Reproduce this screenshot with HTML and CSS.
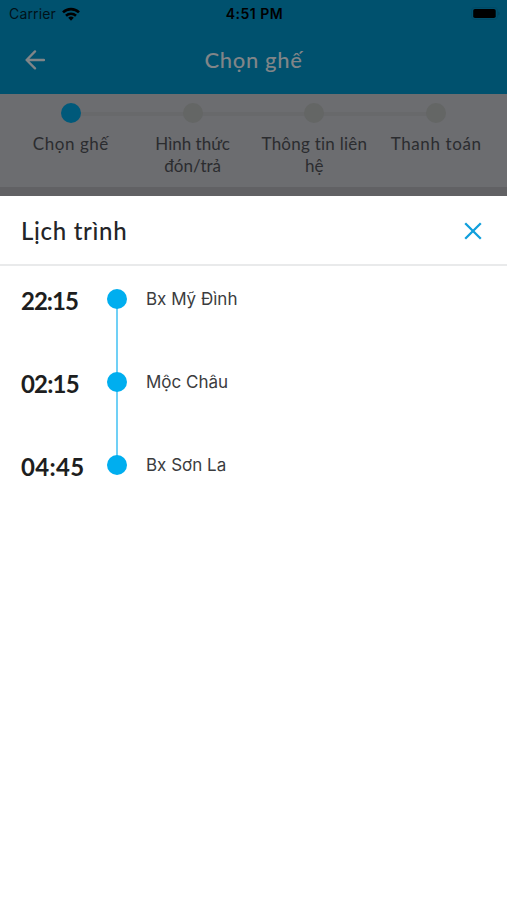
FILE: index.html
```
<!DOCTYPE html>
<html lang="vi">
<head>
<meta charset="utf-8">
<meta name="viewport" content="width=device-width, initial-scale=1">
<title>Lịch trình</title>
<link rel="stylesheet" href="styles.css">
</head>
<body>
<header class="header">
  <div class="status">
    <div class="carrier"><span>Carrier</span>
      <svg width="18" height="14" viewBox="0 0 18 14" fill="none" stroke="#000" stroke-width="2.6"><path d="M1 5.4a11.5 11.5 0 0 1 16 0M4 8.7a7.3 7.3 0 0 1 10 0"/><path d="M6.2 10.8a4.2 4.2 0 0 1 5.6 0L9 13.7z" fill="#000" stroke="none"/></svg>
    </div>
    <div class="clock">4:51 PM</div>
    <svg class="battery" width="30" height="14" viewBox="0 0 30 14"><rect x="1.5" y=".5" width="26" height="12" rx="3" fill="none" stroke="#004a66"/><rect x="3.2" y="2" width="22.5" height="9" rx="1.8"/><path d="M28.4 4.5v4c1.5-.6 1.5-3.4 0-4z" fill="#00435d"/></svg>
  </div>
  <div class="navbar">
    <svg class="back" width="20" height="20" viewBox="0 0 20 20" fill="none" stroke="#808588" stroke-width="2.3" stroke-linecap="round" stroke-linejoin="round"><path d="M19 10H1.6M10 1.4 1.6 10l8.4 8.4"/></svg>
    <h1>Chọn ghế</h1>
  </div>
</header>
<nav class="steps">
  <div class="step active"><i></i><span class="seat">Chọn ghế</span></div>
  <div class="step"><i></i><span class="ship">Hình thức<br>đón/trả</span></div>
  <div class="step"><i></i><span class="contact">Thông tin liên<br>hệ</span></div>
  <div class="step"><i></i><span class="pay">Thanh toán</span></div>
</nav>
<main class="sheet">
  <div class="sheet-head">
    <h2>Lịch trình</h2>
    <svg width="18" height="18" viewBox="0 0 18 18" fill="none" stroke="#109fdc" stroke-width="2.3"><path d="M1.2 1.2l15.6 15.6M16.8 1.2 1.2 16.8"/></svg>
  </div>
  <div class="timeline">
    <div class="stop"><time class="narrow">22:15</time><i></i><p>Bx Mỹ Đình</p></div>
    <div class="stop"><time class="medium">02:15</time><i></i><p>Mộc Châu</p></div>
    <div class="stop"><time class="wide">04:45</time><i></i><p>Bx Sơn La</p></div>
  </div>
</main>
</body>
</html>
```
FILE: styles.css
```
* { box-sizing: border-box; }
body {
  margin: 0;
  height: 900px;
  display: flex;
  flex-direction: column;
  background: #616164;
  font-family: Lato, "Open Sans", sans-serif;
  font-variant-ligatures: none;
  overflow: hidden;
}
svg { display: block; }
h1, h2, p { margin: 0; font-weight: 500; }
.header { height: 94px; background: #00516e; }
.status {
  height: 27px;
  padding: 0 7px 0 9px;
  display: grid;
  grid-template-columns: 1fr auto 1fr;
  align-items: center;
  font-family: Inter, sans-serif;
  font-size: 14px;
}
.carrier { display: flex; align-items: center; gap: 6px; color: #001219; letter-spacing: .15px; }
.clock { font-weight: 600; color: #000; letter-spacing: .5px; }
.battery { justify-self: end; }
.navbar {
  height: 66px;
  padding: 0 25px;
  display: grid;
  grid-template-columns: 40px 1fr 40px;
  align-items: center;
}
.navbar h1 {
  color: #808588;
  font-size: 22px;
  line-height: 30px;
  letter-spacing: .65px;
  text-align: center;
  white-space: nowrap;
}
.steps {
  height: 93px;
  padding: 9px 10px 0;
  display: grid;
  grid-template-columns: repeat(4, 1fr);
  background: #6c6d70;
}
.step {
  display: flex;
  flex-direction: column;
  align-items: center;
  gap: 10px;
  position: relative;
  font-size: 17px;
  line-height: 22px;
  text-align: center;
  white-space: nowrap;
  color: #2b2c2f;
}
.seat { letter-spacing: .55px; }
.contact { letter-spacing: .25px; }
.pay { letter-spacing: .6px; }
.step i { width: 20px; height: 20px; border-radius: 50%; background: #646665; z-index: 1; }
.step.active i { background: #00597a; }
.step:not(:last-child)::after {
  content: "";
  position: absolute;
  left: 50%;
  top: 9px;
  width: 100%;
  height: 4px;
  background: #68696b;
}
.sheet { margin-top: 9px; flex: 1; background: #fff; }
.sheet-head {
  height: 70px;
  padding: 0 25px 0 21px;
  display: flex;
  align-items: center;
  justify-content: space-between;
  border-bottom: 2px solid #e9eaeb;
}
.sheet-head h2 { font-size: 24px; letter-spacing: .7px; color: #242528; }
.sheet-head svg { margin-top: 1px; }
.timeline { padding-top: 23px; }
.stop {
  height: 83px;
  padding-left: 21px;
  display: grid;
  grid-template-columns: 86px 20px 1fr;
  position: relative;
}
.stop time { margin-top: -1px; font-size: 24px; line-height: 26px; font-weight: 700; color: #1d1e20; }
.narrow { letter-spacing: -1px; }
.medium { letter-spacing: -.8px; }
.wide { letter-spacing: .35px; }
.stop i { width: 20px; height: 20px; border-radius: 50%; background: #00aeef; z-index: 1; }
.stop:not(:last-child)::after {
  content: "";
  position: absolute;
  left: 116px;
  top: 10px;
  width: 2px;
  height: 83px;
  background: #70d0f6;
}
.stop p {
  padding-left: 19px;
  font-family: Inter, sans-serif;
  font-size: 17px;
  font-weight: 400;
  line-height: 21px;
  color: #3b3c3e;
}
```
